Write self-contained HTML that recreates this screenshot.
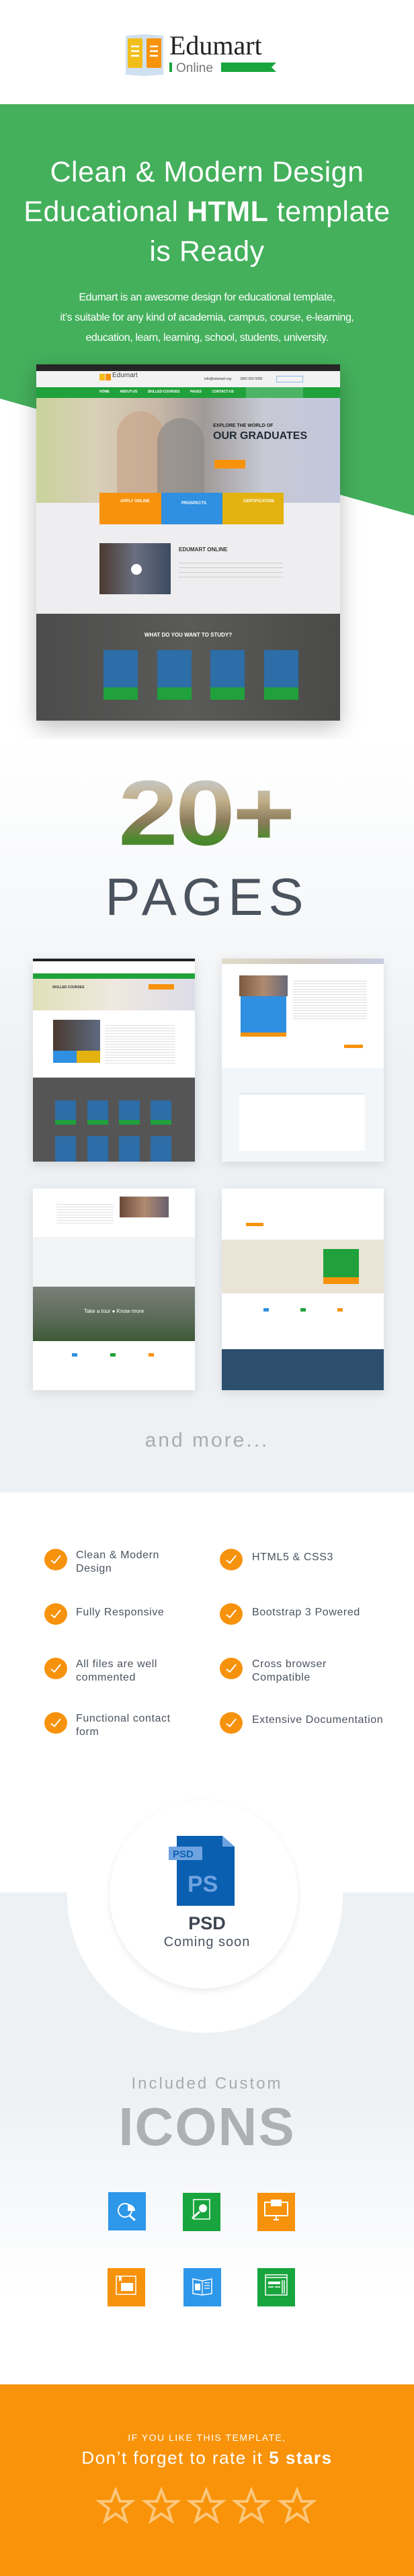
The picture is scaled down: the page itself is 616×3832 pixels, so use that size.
<!DOCTYPE html>
<html><head><meta charset="utf-8">
<style>
*{margin:0;padding:0;box-sizing:border-box}
body{width:616px;height:3832px;position:relative;overflow:hidden;font-family:"Liberation Sans",sans-serif;background:#fff}
.a{position:absolute}
.c{text-align:center;left:0;width:616px}
.feat{position:absolute;font-size:16px;color:#4a535e;letter-spacing:0.6px;line-height:20px}
.chk{position:absolute;width:34px;height:32px;border-radius:50%;background:#f7920c}
.ic{position:absolute;width:56px;height:57px}
</style></head><body>

<!-- logo -->
<svg class="a" style="left:185px;top:47px" width="230" height="70" viewBox="0 0 230 70">
<path d="M2 6 L30 4 L30 66 L2 64Z" fill="#cfe0f0"/>
<path d="M30 4 L58 6 L58 64 L30 66Z" fill="#cfe0f0"/>
<rect x="5" y="10" width="22" height="44" rx="2" fill="#f2be1a"/>
<rect x="33" y="10" width="22" height="44" rx="2" fill="#f7920c"/>
<path d="M10 22h12M10 29h12M10 36h12M38 22h12M38 29h12M38 36h12" stroke="#fff" stroke-width="2.5"/>
<text x="67" y="34" font-family="Liberation Serif,serif" font-size="40" fill="#222">Edumart</text>
<rect x="67" y="46" width="4" height="14" fill="#19a53d"/>
<text x="77" y="60" font-size="19" fill="#777">Online</text>
<path d="M144 46 H226 L219 53 L226 60 H144Z" fill="#19a53d"/>
</svg>

<!-- green hero -->
<svg class="a" style="left:0;top:155px" width="616" height="625"><path d="M0 0H616V612L0 438Z" fill="#44b05c"/></svg>
<div class="a c" style="top:227px;font-size:43px;line-height:59px;color:#fff;letter-spacing:0.5px">Clean &amp; Modern Design<br>Educational <b>HTML</b> template<br>is Ready</div>
<div class="a c" style="top:428px;font-size:16px;line-height:30px;color:#fff;letter-spacing:-0.4px">Edumart is an awesome design for educational template,<br>it’s suitable for any kind of academia, campus, course, e-learning,<br>education, learn, learning, school, students, university.</div>
<div class="a c" style="top:547px;font-size:16px;font-weight:bold;color:#fff;letter-spacing:-0.4px">You can customize it very easy to your needs.</div>

<!-- mockup -->
<div class="a" style="left:54px;top:542px;width:452px;height:530px;box-shadow:0 10px 30px rgba(0,0,0,.25);background:#eeeef0;overflow:hidden">
 <div class="a" style="left:0;top:0;width:452px;height:10px;background:#262626"></div>
 <div class="a" style="left:0;top:10px;width:452px;height:24px;background:#f2f2f2"></div>
 <div class="a" style="left:94px;top:14px;width:8px;height:10px;background:#f2be1a"></div>
 <div class="a" style="left:103px;top:14px;width:8px;height:10px;background:#f7920c"></div>
 <div class="a" style="left:113px;top:11px;font-size:10px;color:#444">Edumart</div>
 <div class="a" style="left:250px;top:19px;font-size:5px;color:#333">info@edumart.org</div>
 <div class="a" style="left:303px;top:19px;font-size:5px;color:#333">1800 000 0000</div>
 <div class="a" style="left:357px;top:17px;width:40px;height:10px;border:1px solid #8ab8e8"></div>
 <div class="a" style="left:0;top:34px;width:452px;height:16px;background:#20a13b"></div>
 <div class="a" style="left:312px;top:34px;width:85px;height:16px;background:#4cb565"></div>
 <div class="a" style="left:94px;top:38px;font-size:5px;color:#fff;font-weight:bold;word-spacing:14px">HOME ABOUT-US SKILLED-COURSES PAGES CONTACT-US</div>
 <div class="a" style="left:0;top:50px;width:452px;height:156px;background:linear-gradient(90deg,#c9d39a 0%,#d8cfb8 20%,#c8b8a6 40%,#a09a98 55%,#c7c9d4 75%,#c3c6dc 100%)"></div>
 <div class="a" style="left:120px;top:70px;width:70px;height:130px;border-radius:40px 40px 0 0;background:#c9a58a;opacity:.7"></div>
 <div class="a" style="left:180px;top:80px;width:70px;height:120px;border-radius:40px 40px 0 0;background:#8d8a88;opacity:.7"></div>
 <div class="a" style="left:263px;top:88px;font-size:7px;color:#222;font-weight:bold">EXPLORE THE WORLD OF</div>
 <div class="a" style="left:263px;top:98px;font-size:16px;color:#1f2a33;font-weight:bold">OUR GRADUATES</div>
 <div class="a" style="left:265px;top:142px;width:46px;height:13px;background:#f7920c"></div>
 <div class="a" style="left:94px;top:191px;width:92px;height:47px;background:#f7920c"></div>
 <div class="a" style="left:186px;top:191px;width:91px;height:47px;background:#2f8fe0"></div>
 <div class="a" style="left:277px;top:191px;width:91px;height:47px;background:#e4b20f"></div>
 <div class="a" style="left:125px;top:201px;font-size:6px;color:#fff;font-weight:bold">APPLY ONLINE</div>
 <div class="a" style="left:216px;top:204px;font-size:6px;color:#fff;font-weight:bold">PROSPECTS</div>
 <div class="a" style="left:308px;top:201px;font-size:6px;color:#fff;font-weight:bold">CERTIFICATION</div>
 <div class="a" style="left:94px;top:266px;width:106px;height:76px;background:linear-gradient(90deg,#4a3a30,#6a6f80,#3d4a60)"></div>
 <div class="a" style="left:141px;top:297px;width:16px;height:16px;border-radius:50%;background:#fff"></div>
 <div class="a" style="left:212px;top:271px;font-size:8px;color:#333;font-weight:bold">EDUMART ONLINE</div>
 <div class="a" style="left:212px;top:291px;width:155px;height:28px;background:repeating-linear-gradient(#eeeef0 0 4px,#ccc 4px 5px,#eeeef0 5px 7px)"></div>
 <div class="a" style="left:0;top:371px;width:452px;height:159px;background:linear-gradient(90deg,#4c4c4c,#5a5a58,#4a4a48)"></div>
 <div class="a" style="left:0;top:398px;width:452px;text-align:center;font-size:8px;color:#fff;font-weight:bold">WHAT DO YOU WANT TO STUDY?</div>
 <div class="a" style="left:100px;top:425px;width:51px;height:74px;background:linear-gradient(#2d6da8 75%,#20a13b 75%)"></div>
 <div class="a" style="left:180px;top:425px;width:51px;height:74px;background:linear-gradient(#2d6da8 75%,#20a13b 75%)"></div>
 <div class="a" style="left:259px;top:425px;width:51px;height:74px;background:linear-gradient(#2d6da8 75%,#20a13b 75%)"></div>
 <div class="a" style="left:339px;top:425px;width:51px;height:74px;background:linear-gradient(#2d6da8 75%,#20a13b 75%)"></div>
</div>

<!-- 20+ pages section bg -->
<div class="a" style="left:0;top:1100px;width:616px;height:1120px;background:linear-gradient(#fff,#eef1f4 45%,#eef1f4)"></div>
<div class="a" style="left:176px;top:1145px;width:264px;height:150px;font-size:160px;font-weight:bold;line-height:150px;letter-spacing:-4px;color:#6d7a4a;background:linear-gradient(#c8d4e4 0%,#c2b08a 35%,#8a7a5a 60%,#4d8a2e 80%,#3f7a28 100%);-webkit-background-clip:text;background-clip:text;-webkit-text-fill-color:transparent;transform:scaleY(0.86);transform-origin:top">20+</div>
<div class="a c" style="top:1294px;font-size:78px;line-height:80px;color:#4a535e;letter-spacing:8px">PAGES</div>

<!-- small screenshots -->
<div class="a" style="left:49px;top:1426px;width:241px;height:302px;background:#fff;box-shadow:0 4px 14px rgba(0,0,0,.12);overflow:hidden">
 <div class="a" style="left:0;top:0;width:241px;height:4px;background:#222"></div>
 <div class="a" style="left:0;top:22px;width:241px;height:8px;background:#20a13b"></div>
 <div class="a" style="left:0;top:30px;width:241px;height:47px;background:linear-gradient(90deg,#dfe0b8,#efe8e0,#dcdce8)"></div>
 <div class="a" style="left:29px;top:40px;font-size:5px;font-weight:bold;color:#333">SKILLED COURSES</div>
 <div class="a" style="left:172px;top:38px;width:38px;height:8px;background:#f7920c"></div>
 <div class="a" style="left:30px;top:91px;width:70px;height:46px;background:linear-gradient(90deg,#4a3a30,#5e6a80)"></div>
 <div class="a" style="left:30px;top:137px;width:35px;height:18px;background:#2f8fe0"></div>
 <div class="a" style="left:65px;top:137px;width:35px;height:18px;background:#e4b20f"></div>
 <div class="a" style="left:107px;top:96px;width:105px;height:60px;background:repeating-linear-gradient(#fff 0 3px,#ddd 3px 4px)"></div>
 <div class="a" style="left:0;top:177px;width:241px;height:125px;background:#555"></div>
 <div class="a" style="left:33px;top:211px;width:31px;height:36px;background:linear-gradient(#2d6da8 80%,#20a13b 80%)"></div>
 <div class="a" style="left:81px;top:211px;width:31px;height:36px;background:linear-gradient(#2d6da8 80%,#20a13b 80%)"></div>
 <div class="a" style="left:128px;top:211px;width:31px;height:36px;background:linear-gradient(#2d6da8 80%,#20a13b 80%)"></div>
 <div class="a" style="left:175px;top:211px;width:31px;height:36px;background:linear-gradient(#2d6da8 80%,#20a13b 80%)"></div>
 <div class="a" style="left:33px;top:264px;width:31px;height:38px;background:#2d6da8"></div>
 <div class="a" style="left:81px;top:264px;width:31px;height:38px;background:#2d6da8"></div>
 <div class="a" style="left:128px;top:264px;width:31px;height:38px;background:#2d6da8"></div>
 <div class="a" style="left:175px;top:264px;width:31px;height:38px;background:#2d6da8"></div>
</div>
<div class="a" style="left:330px;top:1426px;width:241px;height:302px;background:#f3f6f9;box-shadow:0 4px 14px rgba(0,0,0,.1);overflow:hidden">
 <div class="a" style="left:0;top:0;width:241px;height:163px;background:#fff"></div>
 <div class="a" style="left:0;top:0;width:241px;height:8px;background:linear-gradient(90deg,#e0dcc8,#d0c8c0,#c8cce0)"></div>
 <div class="a" style="left:26px;top:25px;width:72px;height:31px;background:linear-gradient(90deg,#7a5a40,#b08a70,#6a6a78)"></div>
 <div class="a" style="left:28px;top:56px;width:68px;height:54px;background:#2f8fe0"></div>
 <div class="a" style="left:28px;top:110px;width:68px;height:6px;background:#f7920c"></div>
 <div class="a" style="left:106px;top:30px;width:110px;height:60px;background:repeating-linear-gradient(#fff 0 3px,#ddd 3px 4px)"></div>
 <div class="a" style="left:182px;top:128px;width:28px;height:5px;background:#f7920c"></div>
 <div class="a" style="left:26px;top:200px;width:187px;height:86px;background:#fff;border-top:2px solid #d8e8f6"></div>
</div>
<div class="a" style="left:49px;top:1768px;width:241px;height:300px;background:#fff;box-shadow:0 4px 14px rgba(0,0,0,.1);overflow:hidden">
 <div class="a" style="left:129px;top:12px;width:73px;height:31px;background:linear-gradient(90deg,#6a4a38,#b08a70,#6a6070)"></div>
 <div class="a" style="left:35px;top:20px;width:85px;height:35px;background:repeating-linear-gradient(#fff 0 3px,#e0e0e0 3px 4px)"></div>
 <div class="a" style="left:0;top:72px;width:241px;height:74px;background:#f3f4f6"></div>
 <div class="a" style="left:0;top:146px;width:241px;height:81px;background:linear-gradient(#7a8078,#5a6a58 60%,#3e5a38)"></div>
 <div class="a" style="left:0;top:178px;width:241px;text-align:center;font-size:8px;color:#fff">Take a tour &#9679; Know more</div>
 <div class="a" style="left:58px;top:245px;width:8px;height:5px;background:#2f8fe0"></div>
 <div class="a" style="left:115px;top:245px;width:8px;height:5px;background:#20a13b"></div>
 <div class="a" style="left:172px;top:245px;width:8px;height:5px;background:#f7920c"></div>
</div>
<div class="a" style="left:330px;top:1768px;width:241px;height:300px;background:#fff;box-shadow:0 4px 14px rgba(0,0,0,.1);overflow:hidden">
 <div class="a" style="left:36px;top:51px;width:26px;height:5px;background:#f7920c"></div>
 <div class="a" style="left:0;top:76px;width:241px;height:80px;background:#e9e4d6"></div>
 <div class="a" style="left:151px;top:90px;width:53px;height:42px;background:#20a13b"></div>
 <div class="a" style="left:151px;top:132px;width:53px;height:10px;background:#f7920c"></div>
 <div class="a" style="left:62px;top:178px;width:8px;height:5px;background:#2f8fe0"></div>
 <div class="a" style="left:117px;top:178px;width:8px;height:5px;background:#20a13b"></div>
 <div class="a" style="left:172px;top:178px;width:8px;height:5px;background:#f7920c"></div>
 <div class="a" style="left:0;top:239px;width:241px;height:61px;background:#2c4f6e"></div>
</div>
<div class="a c" style="top:2126px;font-size:30px;color:#a9adb1;letter-spacing:3px">and more...</div>

<!-- features -->
<svg width="0" height="0" style="position:absolute"><defs><symbol id="ck" viewBox="0 0 34 32"><path d="M10 17 L15 21 L24 10" fill="none" stroke="#fff" stroke-width="2"/></symbol></defs></svg>
<div class="chk" style="left:66px;top:2304px"><svg width="34" height="32"><use href="#ck"/></svg></div>
<div class="feat" style="left:113px;top:2304px">Clean &amp; Modern<br>Design</div>
<div class="chk" style="left:327px;top:2304px"><svg width="34" height="32"><use href="#ck"/></svg></div>
<div class="feat" style="left:375px;top:2307px">HTML5 &amp; CSS3</div>
<div class="chk" style="left:66px;top:2385px"><svg width="34" height="32"><use href="#ck"/></svg></div>
<div class="feat" style="left:113px;top:2389px">Fully Responsive</div>
<div class="chk" style="left:327px;top:2385px"><svg width="34" height="32"><use href="#ck"/></svg></div>
<div class="feat" style="left:375px;top:2389px">Bootstrap 3 Powered</div>
<div class="chk" style="left:66px;top:2466px"><svg width="34" height="32"><use href="#ck"/></svg></div>
<div class="feat" style="left:113px;top:2466px">All files are well<br>commented</div>
<div class="chk" style="left:327px;top:2466px"><svg width="34" height="32"><use href="#ck"/></svg></div>
<div class="feat" style="left:375px;top:2466px">Cross browser<br>Compatible</div>
<div class="chk" style="left:66px;top:2547px"><svg width="34" height="32"><use href="#ck"/></svg></div>
<div class="feat" style="left:113px;top:2547px">Functional contact<br>form</div>
<div class="chk" style="left:327px;top:2547px"><svg width="34" height="32"><use href="#ck"/></svg></div>
<div class="feat" style="left:375px;top:2549px">Extensive Documentation</div>

<!-- gray band + PSD -->
<div class="a" style="left:0;top:2815px;width:616px;height:735px;background:linear-gradient(#eef1f4 0,#eef1f4 300px,#fff 600px)"></div>
<div class="a" style="left:100px;top:2614px;width:410px;height:410px;border-radius:50%;background:#fff"></div>
<div class="a" style="left:163px;top:2678px;width:280px;height:280px;border-radius:50%;background:#fff;box-shadow:0 4px 10px rgba(0,0,0,.08)"></div>
<svg class="a" style="left:251px;top:2731px" width="100" height="104">
<path d="M12 0 H80 L98 16 V104 H12Z" fill="#0a5fb0"/>
<path d="M80 0 L98 16 H80Z" fill="#6ea3e0"/>
<rect x="0" y="16" width="50" height="20" fill="#6ea3e0"/>
<text x="6" y="32" font-size="15" font-weight="bold" fill="#0a5fb0">PSD</text>
<text x="28" y="83" font-size="34" font-weight="bold" fill="#6ea3e0">PS</text>
</svg>
<div class="a c" style="top:2846px;font-size:27px;font-weight:bold;color:#3e4752;line-height:30px">PSD</div>
<div class="a c" style="top:2878px;font-size:20px;color:#4a535e;letter-spacing:1px">Coming soon</div>

<!-- icons -->
<div class="a c" style="top:3086px;font-size:24px;color:#a8abae;letter-spacing:3px">Included Custom</div>
<div class="a c" style="top:3124px;font-size:80px;font-weight:bold;color:#aeb0b3;line-height:80px;letter-spacing:2px">ICONS</div>
<div class="ic" style="left:161px;top:3261px;background:#2d97ea"><svg width="56" height="57"><circle cx="25" cy="27" r="10" fill="none" stroke="#fff" stroke-width="2"/><path d="M29 18 A10 10 0 0 1 40 28 H29Z" fill="#fff"/><path d="M32 35 L40 42" stroke="#fff" stroke-width="3"/></svg></div>
<div class="ic" style="left:272px;top:3262px;background:#19a53d"><svg width="56" height="57"><rect x="16" y="10" width="24" height="29" fill="none" stroke="#fff" stroke-width="1.5"/><circle cx="30" cy="23" r="6" fill="#fff"/><path d="M25 28 L14 38" stroke="#fff" stroke-width="3"/></svg></div>
<div class="ic" style="left:383px;top:3262px;background:#f7920c"><svg width="56" height="57"><rect x="11" y="14" width="34" height="20" fill="none" stroke="#fff" stroke-width="2"/><rect x="20" y="10" width="16" height="10" fill="#fff"/><path d="M24 40 H32 M28 34 V40" stroke="#fff" stroke-width="2"/></svg></div>
<div class="ic" style="left:160px;top:3374px;background:#f7920c"><svg width="56" height="57"><rect x="13" y="12" width="29" height="27" fill="none" stroke="#fff" stroke-width="1.5"/><rect x="20" y="22" width="18" height="12" fill="#fff"/><path d="M17 12 V20 L19 18 L21 20 V12" fill="#fff"/></svg></div>
<div class="ic" style="left:273px;top:3374px;background:#2d97ea"><svg width="56" height="57"><path d="M14 16 L28 19 L42 16 V38 L28 40 L14 38Z" fill="none" stroke="#fff" stroke-width="1.5"/><rect x="17" y="23" width="8" height="10" fill="#fff"/><path d="M31 22h8M31 26h8M31 30h8M28 19V40" stroke="#fff" stroke-width="1.2"/></svg></div>
<div class="ic" style="left:383px;top:3374px;background:#19a53d"><svg width="56" height="57"><rect x="12" y="10" width="32" height="30" fill="none" stroke="#fff" stroke-width="1.5"/><path d="M12 14 H44" stroke="#fff" stroke-width="1.5"/><rect x="16" y="20" width="18" height="4" fill="#fff"/><path d="M16 28h8M26 28h8M37 18v20M40 18v20" stroke="#fff" stroke-width="1.5"/></svg></div>

<!-- orange -->
<div class="a" style="left:0;top:3547px;width:616px;height:285px;background:#f8930a"></div>
<div class="a c" style="top:3618px;font-size:14px;color:#fff;letter-spacing:1.5px">IF YOU LIKE THIS TEMPLATE,</div>
<div class="a c" style="top:3641px;font-size:26px;color:#fff;letter-spacing:1.5px">Don’t forget to rate it <b>5 stars</b></div>
<svg class="a" style="left:140px;top:3700px" width="340" height="60">
<defs><path id="st" d="M27 4 L33.5 21 L51 21 L37 32 L42.5 50 L27 39.5 L11.5 50 L17 32 L3 21 L20.5 21Z" fill="none" stroke="#fcc77a" stroke-width="4" stroke-linejoin="miter"/></defs>
<use href="#st" x="5"/><use href="#st" x="73"/><use href="#st" x="140"/><use href="#st" x="207"/><use href="#st" x="275"/>
</svg>
</body></html>
